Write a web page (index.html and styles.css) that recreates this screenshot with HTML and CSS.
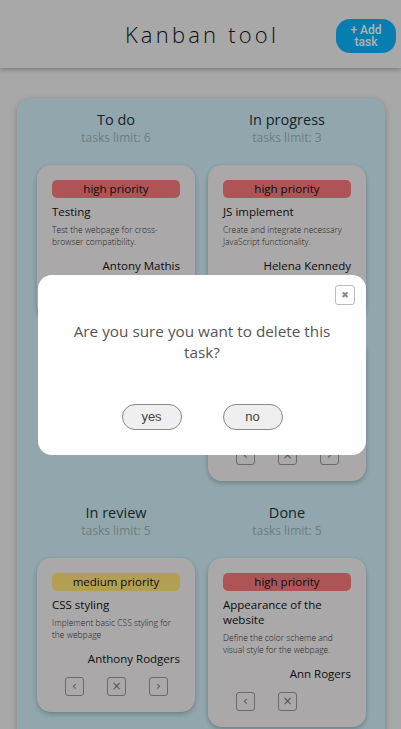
FILE: index.html
```html
<!DOCTYPE html>
<html lang="en">
<head>
<meta charset="utf-8">
<title>Kanban tool</title>
<link rel="stylesheet" href="styles.css">
</head>
<body>
<header class="header">
  <h1 class="title">Kanban tool</h1>
  <button class="add-btn">+ Add<br>task</button>
</header>
<main class="board">
  <section class="column">
    <div class="col-head"><h2 class="col-title">To do</h2><div class="col-limit">tasks limit: 6</div></div>
    <div class="cards">
      <article class="card">
        <div class="prio high">high priority</div>
        <h3 class="card-title">Testing</h3>
        <p class="card-desc">Test the webpage for cross-browser compatibility.</p>
        <div class="card-user">Antony Mathis</div>
        <div class="card-actions"><button class="act">&#8249;</button><button class="act">&#215;</button><button class="act">&#8250;</button></div>
      </article>
    </div>
  </section>
  <section class="column">
    <div class="col-head"><h2 class="col-title">In progress</h2><div class="col-limit">tasks limit: 3</div></div>
    <div class="cards">
      <article class="card">
        <div class="prio high">high priority</div>
        <h3 class="card-title">JS implement</h3>
        <p class="card-desc">Create and integrate necessary JavaScript functionality.</p>
        <div class="card-user">Helena Kennedy</div>
        <div class="card-actions"><button class="act">&#8249;</button><button class="act">&#215;</button><button class="act">&#8250;</button></div>
      </article>
      <article class="card">
        <div class="prio medium">medium priority</div>
        <h3 class="card-title">Layout</h3>
        <p class="card-desc">Build the page layout.</p>
        <div class="card-user">Mark Stone</div>
        <div class="card-actions"><button class="act">&#8249;</button><button class="act">&#215;</button><button class="act">&#8250;</button></div>
      </article>
    </div>
  </section>
  <section class="column">
    <div class="col-head"><h2 class="col-title">In review</h2><div class="col-limit">tasks limit: 5</div></div>
    <div class="cards">
      <article class="card">
        <div class="prio medium">medium priority</div>
        <h3 class="card-title">CSS styling</h3>
        <p class="card-desc">Implement basic CSS styling for the webpage</p>
        <div class="card-user">Anthony Rodgers</div>
        <div class="card-actions"><button class="act">&#8249;</button><button class="act">&#215;</button><button class="act">&#8250;</button></div>
      </article>
    </div>
  </section>
  <section class="column">
    <div class="col-head"><h2 class="col-title">Done</h2><div class="col-limit">tasks limit: 5</div></div>
    <div class="cards">
      <article class="card">
        <div class="prio high">high priority</div>
        <h3 class="card-title">Appearance of the website</h3>
        <p class="card-desc">Define the color scheme and visual style for the webpage.</p>
        <div class="card-user">Ann Rogers</div>
        <div class="card-actions"><button class="act">&#8249;</button><button class="act">&#215;</button></div>
      </article>
    </div>
  </section>
</main>
<div class="overlay">
  <div class="modal">
    <div class="modal-top"><button class="close">&#10006;</button></div>
    <p class="modal-text">Are you sure you want to delete this task?</p>
    <div class="modal-actions"><button class="pill">yes</button><button class="pill">no</button></div>
  </div>
</div>
</body>
</html>
```
FILE: styles.css
```css
html { overflow: hidden; }
body {
  margin: 0;
  background: #f1f1f1;
  font-family: "Open Sans", "Noto Sans", sans-serif;
  color: #222;
}
.header {
  height: 68px;
  background: #f1f1f1;
  box-shadow: 0 2px 4px rgba(0,0,0,0.25);
  display: flex;
  align-items: center;
  justify-content: center;
  position: relative;
}
.title {
  margin: 0;
  font-weight: 300;
  font-size: 22px;
  letter-spacing: 3.2px;
  color: #111;
  padding-left: 3px;
}
.add-btn {
  position: absolute;
  right: 5px;
  top: 19px;
  width: 60px;
  height: 34px;
  border: none;
  border-radius: 14px;
  background: #0cb5fd;
  color: #fff;
  font-family: Roboto, "Liberation Sans", sans-serif;
  font-size: 12px;
  font-weight: 500;
  line-height: 12px;
  padding: 0;
}
.board {
  margin: 30px 16px 0 17px;
  background: #d0f0f8;
  border-radius: 14px;
  box-shadow: 0 2px 6px rgba(0,0,0,0.25);
  padding: 0 19px 30px 20px;
  display: grid;
  grid-template-columns: 158px 158px;
  column-gap: 13px;
  row-gap: 10px;
  align-items: start;
}
.col-head {
  text-align: center;
  height: 55px;
  padding-top: 12px;
}
.col-title {
  margin: 0;
  font-weight: 400;
  font-size: 14.5px;
  line-height: 20px;
  color: #22333c;
}
.col-limit {
  font-size: 12px;
  line-height: 16px;
  color: #9eb3b9;
  font-weight: 400;
}
.cards {
  display: flex;
  flex-direction: column;
  gap: 20px;
}
.card {
  background: #f4f1f2;
  border-radius: 14px;
  box-shadow: 0 2px 5px rgba(0,0,0,0.25);
  padding: 15px 15px 16px 15px;
}
.prio {
  height: 18px;
  border-radius: 5px;
  text-align: center;
  font-size: 11.5px;
  line-height: 18px;
  color: #111;
}
.prio.high { background: #fb797b; }
.prio.medium { background: #ffe476; }
.card-title {
  margin: 6px 0 0;
  font-weight: 400;
  font-size: 11.5px;
  line-height: 15px;
  color: #111;
}
.card-desc {
  margin: 5px 0 0;
  font-size: 8.5px;
  font-weight: 300;
  line-height: 12px;
  color: #333;
}
.card-user {
  margin-top: 10px;
  text-align: right;
  font-size: 11.5px;
  line-height: 16px;
  color: #111;
}
.card-actions {
  margin-top: 10px;
  display: flex;
  gap: 23px;
  padding-left: 13px;
}
.act {
  width: 19px;
  height: 19px;
  padding: 0;
  border: 1px solid #999;
  border-radius: 3px;
  background: transparent;
  color: #777;
  font-size: 12px;
  line-height: 15px;
  font-family: "DejaVu Sans", sans-serif;
}
.overlay {
  position: fixed;
  inset: 0;
  background: rgba(0,0,0,0.3);
  display: flex;
  align-items: center;
  justify-content: center;
}
.modal {
  width: 328px;
  height: 180px;
  margin-left: 3px;
  box-sizing: border-box;
  background: #fff;
  border-radius: 14px;
  padding: 10px 11px 0 11px;
}
.modal-top {
  display: flex;
  justify-content: flex-end;
}
.close {
  width: 20px;
  height: 20px;
  padding: 0;
  border: 1px solid #bbb;
  border-radius: 3px;
  background: #fff;
  color: #888;
  font-size: 9px;
  line-height: 18px;
  font-family: "DejaVu Sans", sans-serif;
}
.modal-text {
  margin: 16px 0 0;
  text-align: center;
  font-size: 15.3px;
  line-height: 21px;
  color: #555;
  padding: 0 20px;
}
.modal-actions {
  margin-top: 41px;
  display: flex;
  justify-content: center;
  gap: 41px;
}
.pill {
  width: 60px;
  height: 26px;
  border: 1px solid #888;
  border-radius: 13px;
  background: #efefef;
  color: #444;
  font-family: "Liberation Sans", Arial, sans-serif;
  font-size: 13px;
  padding: 0;
}
```
